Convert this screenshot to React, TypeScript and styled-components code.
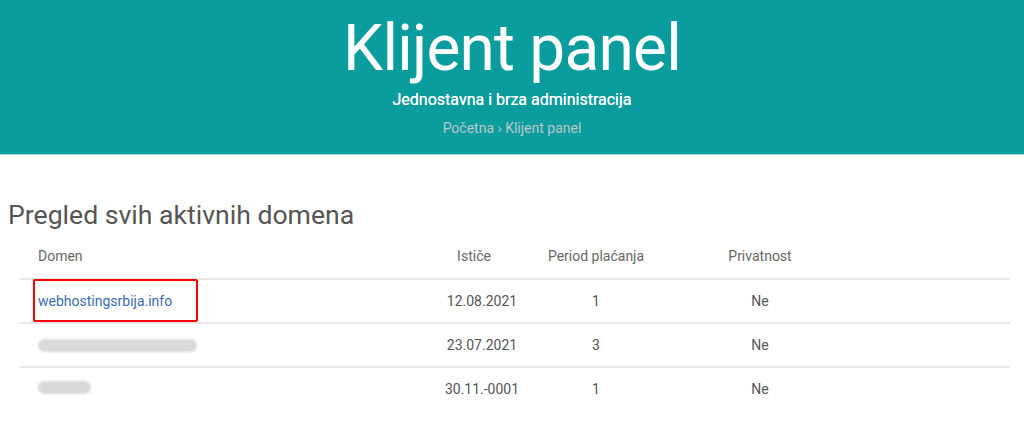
import React from "react";
import styled, { createGlobalStyle } from "styled-components";

const Global = createGlobalStyle`
  html, body { margin: 0; padding: 0; background: #fff; }
  body { font-family: Roboto, "Liberation Sans", Arial, sans-serif; }
`;

const Hero = styled.header`
  box-sizing: border-box;
  height: 155px;
  padding-top: 9px;
  background: #0b9c9e;
  border-bottom: 1px solid #a4dbdd;
  display: flex;
  flex-direction: column;
  align-items: center;
  color: #fff;
`;

const Title = styled.h1`
  margin: 0;
  font-size: 64px;
  line-height: 80px;
  letter-spacing: -0.8px;
  font-weight: 400;
`;

const Subtitle = styled.p`
  margin: 1px 0 0;
  font-size: 16px;
  line-height: 20px;
  font-weight: 400;
  text-shadow: 0 0 0.4px #fff;
`;

const Crumbs = styled.nav`
  margin-top: 8px;
  font-size: 14px;
  line-height: 20px;
  color: #bcc7c7;
`;

const Main = styled.main`
  display: flex;
  flex-direction: column;
  gap: 1px;
  padding: 42px 14px 0 8px;
`;

const Heading = styled.h2`
  margin: 0;
  font-size: 26.6px;
  line-height: 36px;
  font-weight: 400;
  color: #555;
`;

const Table = styled.div`
  display: flex;
  flex-direction: column;
  margin-left: 12px;
  width: 990px;
`;

const Row = styled.div<{ $head?: boolean }>`
  display: grid;
  grid-template-columns: 408px 108px 120px 208px 1fr;
  height: ${(p) => (p.$head ? 44 : 42)}px;
  align-items: center;
  border-top: ${(p) => (p.$head ? "none" : "2px solid #e8e8e8")};
  font-size: 14px;
  color: ${(p) => (p.$head ? "#666" : "#555")};
`;

const Cell = styled.div<{ $left?: boolean; $padRight?: number }>`
  text-align: ${(p) => (p.$left ? "left" : "center")};
  padding-left: ${(p) => (p.$left ? 18 : 0)}px;
  padding-right: ${(p) => p.$padRight ?? 0}px;
  white-space: nowrap;
`;

const DomainCell = styled.div`
  position: relative;
  align-self: stretch;
  display: flex;
  align-items: center;
  padding-left: 18px;
`;

const DomainLink = styled.a`
  color: #3b6db0;
  text-decoration: none;
`;

const Highlight = styled.div`
  position: absolute;
  left: 13px;
  top: -1px;
  bottom: 0;
  width: 165px;
  box-sizing: border-box;
  border: 2px solid #ff0000;
  border-radius: 2px;
  pointer-events: none;
`;

const Blur = styled.span<{ $w: number; $lift?: boolean }>`
  display: block;
  width: ${(p) => p.$w}px;
  height: 13px;
  margin-bottom: ${(p) => (p.$lift ? 4 : 0)}px;
  border-radius: 7px;
  background: #d9d9d9;
  filter: blur(1px);
`;

const rows = [
  { domain: "webhostingsrbija.info", date: "12.08.2021", period: "1", priv: "Ne" },
  { blur: 159, date: "23.07.2021", period: "3", priv: "Ne" },
  { blur: 53, lift: true, date: "30.11.-0001", period: "1", priv: "Ne" },
];

export default function App() {
  return (
    <>
      <Global />
      <Hero>
        <Title>Klijent panel</Title>
        <Subtitle>Jednostavna i brza administracija</Subtitle>
        <Crumbs>Početna › Klijent panel</Crumbs>
      </Hero>
      <Main>
        <Heading>Pregled svih aktivnih domena</Heading>
        <Table>
          <Row $head>
            <Cell $left>Domen</Cell>
            <Cell $padRight={16}>Ističe</Cell>
            <Cell>Period plaćanja</Cell>
            <Cell>Privatnost</Cell>
            <Cell />
          </Row>
          {rows.map((r, i) => (
            <Row key={i}>
              <DomainCell>
                {r.domain ? (
                  <>
                    <DomainLink href="#">{r.domain}</DomainLink>
                    <Highlight />
                  </>
                ) : (
                  <Blur $w={r.blur!} $lift={r.lift} />
                )}
              </DomainCell>
              <Cell>{r.date}</Cell>
              <Cell>{r.period}</Cell>
              <Cell>{r.priv}</Cell>
              <Cell />
            </Row>
          ))}
        </Table>
      </Main>
    </>
  );
}
